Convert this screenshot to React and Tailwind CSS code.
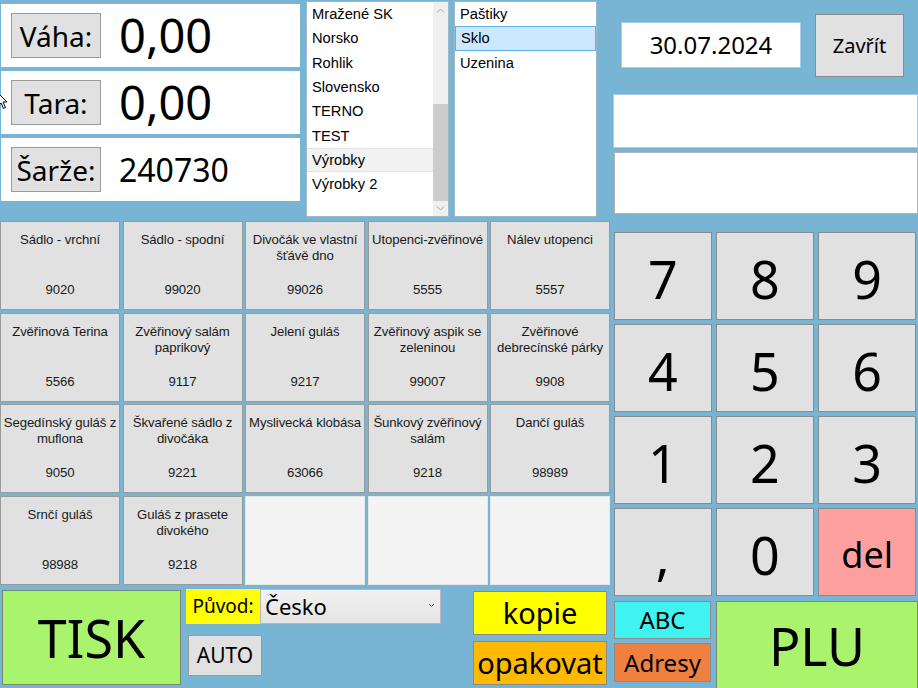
import React from 'react';

const SEG = "font-['Noto_Sans',sans-serif]";
const ARI = "font-['Liberation_Sans',Arial,sans-serif]";

const products = [
  { name: 'Sádlo - vrchní', code: '9020' },
  { name: 'Sádlo - spodní', code: '99020' },
  { name: 'Divočák ve vlastní šťávě dno', code: '99026' },
  { name: 'Utopenci-zvěřinové', code: '5555' },
  { name: 'Nálev utopenci', code: '5557' },
  { name: 'Zvěřinová Terina', code: '5566' },
  { name: 'Zvěřinový salám paprikový', code: '9117' },
  { name: 'Jelení guláš', code: '9217' },
  { name: 'Zvěřinový aspik se zeleninou', code: '99007' },
  { name: 'Zvěřinové debrecínské párky', code: '9908' },
  { name: 'Segedínský guláš z muflona', code: '9050' },
  { name: 'Škvařené sádlo z divočáka', code: '9221' },
  { name: 'Myslivecká klobása', code: '63066' },
  { name: 'Šunkový zvěřinový salám', code: '9218' },
  { name: 'Dančí guláš', code: '98989' },
  { name: 'Srnčí guláš', code: '98988' },
  { name: 'Guláš z prasete divokého', code: '9218' },
  null,
  null,
  null,
];

const groups = ['Mražené SK', 'Norsko', 'Rohlik', 'Slovensko', 'TERNO', 'TEST', 'Výrobky', 'Výrobky 2'];
const subgroups = ['Paštiky', 'Sklo', 'Uzenina'];
const keys = ['7', '8', '9', '4', '5', '6', '1', '2', '3', ',', '0', 'del'];

const ValuePanel = ({ label, value, small }) => (
  <div className="h-[63px] bg-white flex items-center">
    <div className={`ml-[10px] w-[90px] h-[45px] bg-[#e1e1e1] border border-[#9a9a9a] flex items-center justify-center text-[28px] text-black ${SEG}`}>
      {label}
    </div>
    <div className={`ml-[18px] text-black ${SEG} ${small ? 'text-[32px]' : 'text-[47px]'}`}>{value}</div>
  </div>
);

const App = () => {
  return (
    <div className="relative w-[918px] h-[688px] bg-[#78b4d4] overflow-hidden flex">
      {/* left side */}
      <div className="w-[613px] flex flex-col">
        <div className="flex h-[218px]">
          <div className="ml-[1px] w-[299px] pt-[4px] flex flex-col gap-[4px]">
            <ValuePanel label="Váha:" value="0,00" />
            <ValuePanel label="Tara:" value="0,00" />
            <ValuePanel label="Šarže:" value="240730" small />
          </div>

          <div className={`ml-[6px] mt-[1px] w-[143px] h-[216px] bg-white border border-[#9fb8c8] flex ${ARI}`}>
            <div className="flex-1">
              {groups.map((g) => (
                <div
                  key={g}
                  className={`h-[24.3px] pl-[5px] flex items-center text-[14.7px] text-black ${g === 'Výrobky' ? 'bg-[#f2f2f2] border-y border-[#e2e2e2]' : ''}`}
                >
                  {g}
                </div>
              ))}
            </div>
            <div className="w-[15px] bg-[#f0f0f0] flex flex-col items-center">
              <svg width="9" height="14" viewBox="0 0 9 14" className="mt-[2px]">
                <path d="M1 8.5 L4.5 5 L8 8.5" fill="none" stroke="#a6a6a6" strokeWidth="1" />
              </svg>
              <div className="mt-[86px] w-[15px] h-[97px] bg-[#cdcdcd]" />
              <svg width="9" height="14" viewBox="0 0 9 14" className="mt-auto mb-[1px]">
                <path d="M1 5.5 L4.5 9 L8 5.5" fill="none" stroke="#a6a6a6" strokeWidth="1" />
              </svg>
            </div>
          </div>

          <div className={`ml-[5px] mt-[1px] w-[143px] h-[216px] bg-white border border-[#9fb8c8] ${ARI}`}>
            {subgroups.map((g) => (
              <div
                key={g}
                className={`h-[24.3px] pl-[5px] flex items-center text-[14.7px] text-black ${g === 'Sklo' ? 'bg-[#cce8ff] border border-[#5fb2ea]' : ''}`}
              >
                {g}
              </div>
            ))}
          </div>
        </div>

        <div className="mt-[3px] w-[610px] grid grid-cols-5 auto-rows-[89px] gap-x-[2.5px] gap-y-[2.5px]">
          {products.map((p, i) =>
            p ? (
              <div
                key={i}
                className={`bg-[#e1e1e1] border border-[#9a9a9a] flex flex-col justify-between items-center text-center px-0 pt-[10px] pb-[11px] text-[13.2px] leading-[16px] text-[#1a1a1a] tracking-[-0.1px] ${ARI}`}
              >
                <div>{p.name}</div>
                <div>{p.code}</div>
              </div>
            ) : (
              <div key={i} className="bg-[#f4f4f4] border border-[#e6e6e6]" />
            )
          )}
        </div>

        <div className="mt-[4.5px] flex items-start">
          <div className={`ml-[2px] mt-[1px] w-[179px] h-[95px] bg-[#aaf46d] border border-[#7a8a70] flex items-center justify-center text-[52px] text-black ${SEG}`}>
            TISK
          </div>
          <div className="ml-[5px] flex flex-col">
            <div className="flex h-[35px]">
              <div className={`w-[74px] bg-[#ffff00] flex items-center justify-center text-[19px] text-black ${SEG}`}>Původ:</div>
              <div className={`w-[181px] bg-gradient-to-b from-[#f2f2f2] to-[#e4e4e4] border border-[#b8b8b8] flex items-center pl-[4px] text-[22px] text-black relative ${SEG}`}>
                Česko
                <svg width="7" height="5" viewBox="0 0 7 5" className="absolute right-[5px] top-[13px]">
                  <path d="M1 1 L3.5 3.5 L6 1" fill="none" stroke="#555" strokeWidth="1" />
                </svg>
              </div>
            </div>
            <div className={`ml-[2px] mt-[11px] w-[74px] h-[41px] bg-[#e1e1e1] border border-[#9a9a9a] flex items-center justify-center text-[21px] text-black ${SEG}`}>
              AUTO
            </div>
          </div>
          <div className="ml-[32px] mt-[2px] flex flex-col gap-[6px]">
            <div className={`w-[134px] h-[44px] bg-[#ffff00] border border-[#8a8a8a] flex items-center justify-center text-[29px] text-black ${SEG}`}>
              kopie
            </div>
            <div className={`w-[134px] h-[44px] bg-[#ffb900] border border-[#8a8a8a] flex items-center justify-center text-[29px] text-black ${SEG}`}>
              opakovat
            </div>
          </div>
        </div>
      </div>

      {/* right side */}
      <div className="w-[305px] flex flex-col">
        <div className="flex items-start h-[94px] shrink-0">
          <div className={`ml-[8px] mt-[22px] w-[180px] h-[46px] bg-white border border-[#a6cde3] flex items-center justify-center text-[24px] text-black ${SEG}`}>
            30.07.2024
          </div>
          <div className={`ml-[14px] mt-[14px] w-[89px] h-[63px] bg-[#e1e1e1] border border-[#8a8a8a] flex items-center justify-center text-[20px] text-black ${SEG}`}>
            Zavřít
          </div>
        </div>
        <div className="w-[305px] h-[54px] shrink-0 bg-white border border-[#a6cde3]" />
        <div className="ml-[1px] mt-[4px] w-[304px] h-[62px] shrink-0 bg-white border border-[#b4b4b4]" />

        <div className="ml-[1px] mt-[18px] w-[302px] grid grid-cols-3 auto-rows-[88px] gap-x-[4.5px] gap-y-[4px]">
          {keys.map((k) => (
            <div
              key={k}
              className={`border border-[#8a8a8a] flex items-center justify-center pt-[6px] text-black ${SEG} ${k === 'del' ? 'bg-[#ffa0a0] text-[36px]' : 'bg-[#e1e1e1] text-[52px]'}`}
            >
              {k}
            </div>
          ))}
        </div>

        <div className="ml-[1px] mt-[5px] flex items-start">
          <div className="flex flex-col gap-[4px]">
            <div className={`w-[97px] h-[38px] bg-[#40f2f0] border border-[#8a8a8a] flex items-center justify-center text-[24px] text-black ${SEG}`}>
              ABC
            </div>
            <div className={`w-[97px] h-[39px] bg-[#f08040] border border-[#8a8a8a] flex items-center justify-center text-[24px] text-black ${SEG}`}>
              Adresy
            </div>
          </div>
          <div className={`ml-[5px] w-[203px] h-[90px] bg-[#aaf46d] border border-[#7a8a70] flex items-center justify-center text-[52px] text-black ${SEG}`}>
            PLU
          </div>
        </div>
      </div>

      {/* mouse pointer */}
      <svg width="12" height="18" viewBox="0 0 12 18" className="absolute left-[-3px] top-[92px]">
        <path d="M1 1 L1 14 L4 11 L6.5 16.5 L8.5 15.5 L6 10 L10 10 Z" fill="white" stroke="black" strokeWidth="1" />
      </svg>
    </div>
  );
};

export default App;
